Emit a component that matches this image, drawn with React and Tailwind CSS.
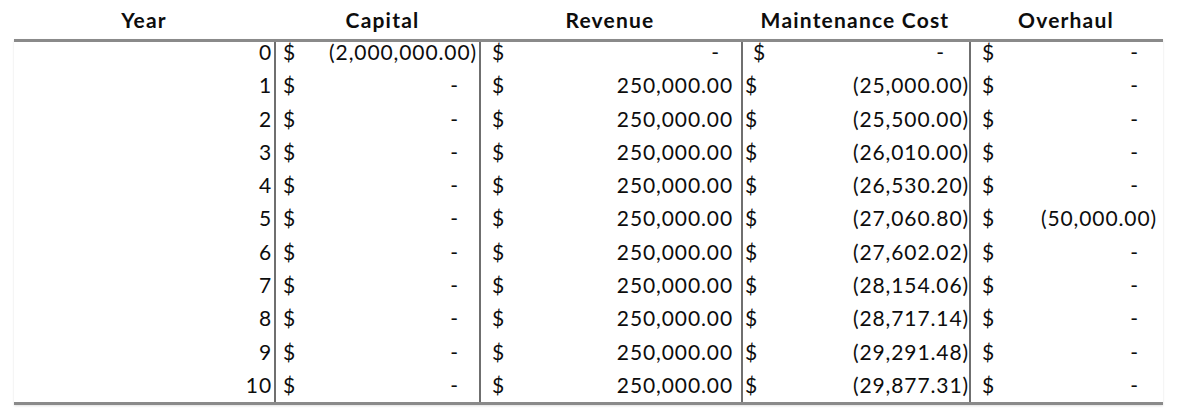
const maintenance = [
  '-',
  '(25,000.00)',
  '(25,500.00)',
  '(26,010.00)',
  '(26,530.20)',
  '(27,060.80)',
  '(27,602.02)',
  '(28,154.06)',
  '(28,717.14)',
  '(29,291.48)',
  '(29,877.31)',
]

const rows = maintenance.map((m, year) => ({
  year,
  capital: year === 0 ? '(2,000,000.00)' : '-',
  revenue: year === 0 ? '-' : '250,000.00',
  maintenance: m,
  overhaul: year === 5 ? '(50,000.00)' : '-',
}))

// right padding per column, depending on what kind of value sits in the cell
const pad = {
  capital: { neg: 'pr-[2px]', dash: 'pr-[20px]', pos: 'pr-[8px]' },
  revenue: { neg: 'pr-[1px]', dash: 'pr-[21px]', pos: 'pr-[8px]' },
  maintenance: { neg: 'pr-[0px]', dash: 'pr-[24px]', pos: 'pr-[7px]' },
  overhaul: { neg: 'pr-[6px]', dash: 'pr-[24px]', pos: 'pr-[12px]' },
}

function kind(v) {
  if (v === '-') return 'dash'
  if (v.startsWith('(')) return 'neg'
  return 'pos'
}

function Money({ col, value, left, last }) {
  return (
    <div
      className={`flex items-start justify-between border-l-2 border-[#6f6f6f] ${left} ${pad[col][kind(value)]} ${last ? 'h-[27.5px]' : 'h-[33.3px]'}`}
    >
      <span>$</span>
      <span>{value}</span>
    </div>
  )
}

export default function App() {
  return (
    <div className="w-[1192px] h-[413px] bg-white text-[#0d0d0d] font-['Lato','Carlito','Liberation_Sans',sans-serif] overflow-hidden">
      <div className="ml-[14px] w-[1149px] grid grid-cols-[260px_205px_262px_228px_194px] h-[39px] items-center text-[21px] leading-[20px] font-bold tracking-[1.2px] text-center">
        <div>Year</div>
        <div className="pl-[12px]">Capital</div>
        <div>Revenue</div>
        <div>Maintenance Cost</div>
        <div>Overhaul</div>
      </div>
      <div className="ml-[14px] w-[1149px] border-t-[3px] border-b-[3px] border-[#8a8a8a] shadow-[0_1px_2px_rgba(0,0,0,0.12)] grid grid-cols-[260px_205px_262px_228px_194px] text-[21px] leading-[20px] tracking-[0.9px]">
        {rows.map((r, i) => {
          const last = i === rows.length - 1
          return [
            <div
              key={`y${i}`}
              className={`text-right pr-[2px] ${last ? 'h-[27.5px]' : 'h-[33.3px]'}`}
            >
              {r.year}
            </div>,
            <Money key={`c${i}`} col="capital" value={r.capital} left="pl-[7px]" last={last} />,
            <Money key={`r${i}`} col="revenue" value={r.revenue} left="pl-[11px]" last={last} />,
            <Money
              key={`m${i}`}
              col="maintenance"
              value={r.maintenance}
              left={i === 0 ? 'pl-[10px]' : 'pl-[2px]'}
              last={last}
            />,
            <Money key={`o${i}`} col="overhaul" value={r.overhaul} left="pl-[11px]" last={last} />,
          ]
        })}
      </div>
    </div>
  )
}
